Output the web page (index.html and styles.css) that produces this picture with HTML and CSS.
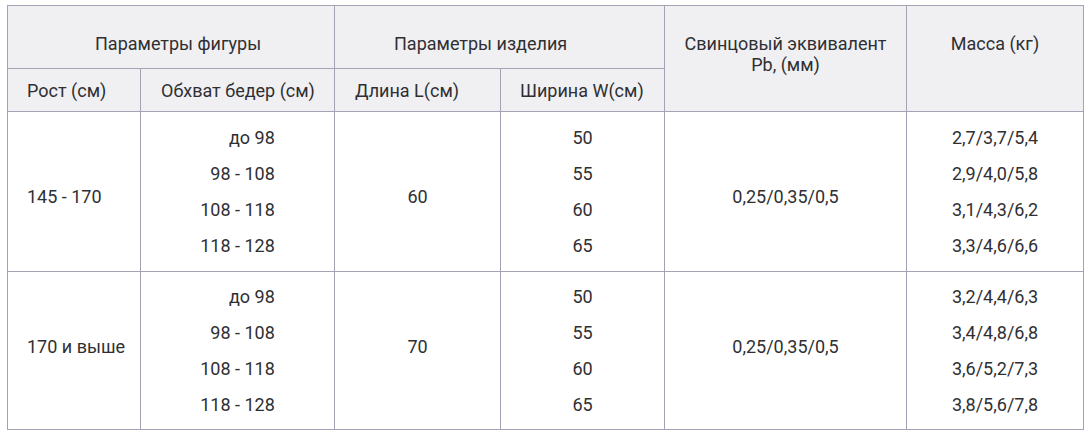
FILE: index.html
```html
<!DOCTYPE html>
<html lang="ru">
<head>
<meta charset="utf-8">
<title>Таблица размеров</title>
<link rel="stylesheet" href="styles.css">
</head>
<body>
<table class="sizes">
  <colgroup>
    <col class="c1"><col class="c2"><col class="c3"><col class="c4"><col class="c5"><col class="c6">
  </colgroup>
  <thead>
    <tr class="h1">
      <th colspan="2" class="th-top th-fig">Параметры фигуры</th>
      <th colspan="2" class="th-top th-prod">Параметры изделия</th>
      <th rowspan="2" class="th-top th-pb">Свинцовый эквивалент Pb, (мм)</th>
      <th rowspan="2" class="th-top th-mass">Масса (кг)</th>
    </tr>
    <tr class="h2">
      <th class="th-sub th-height">Рост (см)</th>
      <th class="th-sub">Обхват бедер (см)</th>
      <th class="th-sub">Длина L(см)</th>
      <th class="th-sub th-width">Ширина W(см)</th>
    </tr>
  </thead>
  <tbody>
    <tr class="g1">
      <td class="height single-down">145 - 170</td>
      <td class="center"><div class="list right">до 98<br>98 - 108<br>108 - 118<br>118 - 128</div></td>
      <td class="center single-down">60</td>
      <td class="center"><div class="list">50<br>55<br>60<br>65</div></td>
      <td class="center single-down">0,25/0,35/0,5</td>
      <td class="center"><div class="list">2,7/3,7/5,4<br>2,9/4,0/5,8<br>3,1/4,3/6,2<br>3,3/4,6/6,6</div></td>
    </tr>
    <tr class="g2">
      <td class="height single-up">170 и выше</td>
      <td class="center"><div class="list right">до 98<br>98 - 108<br>108 - 118<br>118 - 128</div></td>
      <td class="center single-up">70</td>
      <td class="center"><div class="list">50<br>55<br>60<br>65</div></td>
      <td class="center single-up">0,25/0,35/0,5</td>
      <td class="center"><div class="list">3,2/4,4/6,3<br>3,4/4,8/6,8<br>3,6/5,2/7,3<br>3,8/5,6/7,8</div></td>
    </tr>
  </tbody>
</table>
</body>
</html>
```
FILE: styles.css
```css
html, body {
  background: #ffffff;
}
body {
  margin: 5px 0 0 7px;
  font-family: Roboto, "Liberation Sans", Arial, sans-serif;
  font-size: 18px;
  color: #2f2f33;
}
.sizes {
  border-collapse: collapse;
  table-layout: fixed;
  width: 1077px;
}
.c1 { width: 133px; }
.c2 { width: 194px; }
.c3 { width: 166px; }
.c4 { width: 164px; }
.c5 { width: 242px; }
.c6 { width: 177px; }

.sizes th,
.sizes td {
  border: 1px solid #a4a2b4;
  padding: 0;
  line-height: 21px;
  font-weight: 400;
}
.sizes th {
  background: #f0f0f2;
}
.h1 { height: 63px; }
.h2 { height: 43px; }
.g1 { height: 160px; }
.g2 { height: 158px; }

.sizes .th-top {
  vertical-align: top;
  padding-top: 27px;
}
.sizes .th-fig {
  text-align: left;
  padding-left: 87px;
}
.sizes .th-prod {
  text-align: left;
  padding-left: 59px;
}
.sizes .th-pb {
  text-align: center;
  padding-left: 18px;
  padding-right: 18px;
}
.sizes .th-mass {
  text-align: center;
}
.sizes .th-sub {
  text-align: left;
  vertical-align: middle;
  padding-left: 20px;
}
.sizes .th-height { padding-left: 19px; }
.sizes .th-width { padding-left: 19px; }

.sizes td {
  vertical-align: middle;
}
.sizes .height {
  text-align: left;
  padding-left: 19px;
}
.sizes .center {
  text-align: center;
}
.sizes .single-down { padding-top: 10px; }
.sizes .single-up { padding-bottom: 8px; }
.list {
  display: inline-block;
  line-height: 36px;
  text-align: center;
}
.list.right {
  text-align: right;
}
```
